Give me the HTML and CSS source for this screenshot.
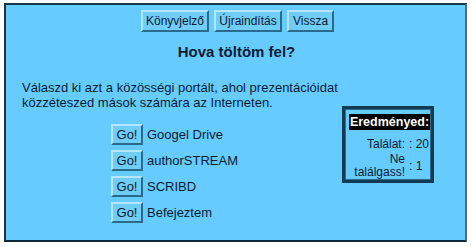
FILE: index.html
```html
<!DOCTYPE html>
<html>
<head>
<meta charset="utf-8">
<link rel="stylesheet" href="styles.css">
</head>
<body>
<div class="panel">
  <div class="toolbar">
    <button class="btn">Könyvjelző</button>
    <button class="btn">Újraindítás</button>
    <button class="btn">Vissza</button>
  </div>
  <h1 class="title">Hova töltöm fel?</h1>
  <div class="main">
    <div class="left">
      <p class="intro">Válaszd ki azt a közösségi portált, ahol prezentációidat közzéteszed mások számára az Interneten.</p>
      <div class="choices">
        <div class="choice"><button class="btn go">Go!</button><span>Googel Drive</span></div>
        <div class="choice"><button class="btn go">Go!</button><span>authorSTREAM</span></div>
        <div class="choice"><button class="btn go">Go!</button><span>SCRIBD</span></div>
        <div class="choice"><button class="btn go">Go!</button><span>Befejeztem</span></div>
      </div>
    </div>
    <div class="results">
      <div class="res-head">Eredményed:</div>
      <table class="res-table">
        <tr><td class="k">Találat:</td><td class="v">: 20</td></tr>
        <tr><td class="k">Ne<br>találgass!</td><td class="v">: 1</td></tr>
      </table>
    </div>
  </div>
</div>
</body>
</html>
```
FILE: styles.css
```css
html, body {
  margin: 0;
  padding: 0;
  background: #ffffff;
}
body {
  font-family: "Liberation Sans", Arial, sans-serif;
  font-size: 13px;
  color: #0c1c33;
}
.panel {
  margin: 3px 0 0 4px;
  width: 459px;
  height: 235px;
  background: #66ccff;
  border: 2px solid #163548;
  border-right-color: #5c6a72;
  border-bottom-color: #10293a;
  display: flex;
  flex-direction: column;
}
.toolbar {
  display: flex;
  justify-content: center;
  gap: 5px;
  padding-top: 5px;
  padding-left: 4px;
}
.btn {
  box-sizing: border-box;
  font-family: "Liberation Sans", Arial, sans-serif;
  font-size: 12px;
  color: #0c1c33;
  background: #70cdf5;
  border: 2px solid;
  border-color: #b4e6ff #2a6a8c #2a6a8c #b4e6ff;
  height: 22px;
  padding: 0;
  margin: 0;
}
.toolbar .btn:nth-child(1) { width: 68px; }
.toolbar .btn:nth-child(2) { width: 68px; }
.toolbar .btn:nth-child(3) { width: 47px; }
.title {
  font-size: 15px;
  font-weight: bold;
  text-align: center;
  margin: 11px 0 0 2px;
  line-height: 18px;
}
.main {
  display: flex;
  flex: 1;
}
.left {
  flex: 1;
  padding-left: 16px;
}
.intro {
  margin: 19px 0 0 0;
  line-height: 15px;
  width: 320px;
}
.choices {
  display: flex;
  flex-direction: column;
  gap: 5px;
  margin-top: 14px;
  padding-left: 89px;
}
.choice {
  display: flex;
  align-items: center;
  gap: 4px;
}
.btn.go {
  width: 32px;
  height: 21px;
  font-size: 13px;
}
.results {
  margin: 45px 34px 0 0;
  width: 81px;
  height: 66px;
  border: 3px solid #123a52;
  box-shadow: inset 0 0 0 1px #2b6c8e;
  padding: 5px 1px 0 4px;
  align-self: flex-start;
}
.res-head {
  background: #000000;
  color: #ffffff;
  font-weight: bold;
  font-size: 12.5px;
  text-align: center;
  height: 16px;
  line-height: 16px;
}
.res-table {
  border-collapse: collapse;
  margin-top: 7px;
  width: 81px;
  font-size: 12px;
}
.res-table td {
  padding: 1px 0;
  line-height: 13px;
  vertical-align: middle;
}
.res-table .k {
  text-align: right;
  width: 56px;
}
.res-table .v {
  text-align: left;
  white-space: nowrap;
  padding-left: 4px;
}
```
